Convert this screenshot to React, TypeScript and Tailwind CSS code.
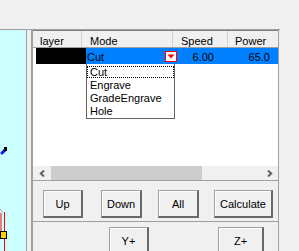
import React from "react";

const Btn = ({ label, className }: { label: string; className: string }) => (
  <div
    className={
      "h-[28px] flex items-center justify-center bg-[#f0f0f0] border border-[#a0a0a0] border-b-2 border-r-2 border-b-[#696969] border-r-[#696969] shadow-[inset_1px_1px_0_#ffffff] " +
      className
    }
  >
    {label}
  </div>
);

export default function App() {
  return (
    <div
      className="w-[299px] h-[251px] bg-[#f0f0f0] overflow-hidden flex flex-col text-black text-[11px] leading-[16px]"
      style={{ fontFamily: "'Liberation Sans', Arial, sans-serif" }}
    >
      <div className="h-[30px] w-[280px] shrink-0 border-b border-[#a0a0a0]" />
      <div className="flex flex-1 min-h-0">
        {/* canvas */}
        <div className="w-[27px] shrink-0 bg-[#ccffff] border-r border-[#a0a0a0] relative">
          <svg width="26" height="221" className="absolute left-0 top-0">
            <line x1="5" y1="120" x2="2" y2="123" stroke="#1010ff" strokeWidth="3" strokeLinecap="round" />
            <rect x="4" y="117" width="3" height="4" fill="#000" />
            <line x1="0" y1="179" x2="3.5" y2="183" stroke="#ff7070" strokeWidth="1" strokeDasharray="1.5 1" />
            <line x1="1" y1="183" x2="1" y2="201" stroke="#ff0000" strokeWidth="1" />
            <line x1="4.5" y1="182" x2="4.5" y2="201" stroke="#ff0000" strokeWidth="1" />
            <line x1="4.5" y1="208" x2="4.5" y2="221" stroke="#ff0000" strokeWidth="1" />
            <rect x="0.5" y="201.5" width="6" height="7" fill="#ffd200" stroke="#000" strokeWidth="1" />
          </svg>
        </div>
        <div className="w-[4px] shrink-0" />
        {/* panel */}
        <div className="w-[248px] shrink-0 flex flex-col border-l-2 border-r border-[#a0a0a0]">
          {/* table */}
          <div className="flex flex-col border-t border-[#808080]">
            {/* header */}
            <div className="h-[17px] flex border-b border-[#a0a0a0] bg-[#f0f0f0]">
              <div className="w-[49px] pl-[7px] pt-[2px] border-r border-[#d0d0d0]">layer</div>
              <div className="w-[91px] pl-[8px] pt-[2px] border-r border-[#d0d0d0]">Mode</div>
              <div className="w-[55px] pl-[8px] pt-[2px] border-r border-[#d0d0d0]">Speed</div>
              <div className="flex-1 pl-[7px] pt-[2px]">Power</div>
            </div>
            {/* body */}
            <div className="h-[118px] bg-white relative">
              <div className="h-[16px] flex">
                <div className="w-[3px]" />
                <div className="w-[50px] bg-black" />
                <div className="flex-1 flex bg-[#0080ff]">
                  <div className="w-[91px] flex items-center pl-[1px]">
                    <span className="pt-[1px] flex-1">Cut</span>
                    <div className="w-[12px] h-[11px] mt-[1px] border border-[#ff0000] bg-white flex items-center justify-center">
                      <svg width="8" height="5" viewBox="0 0 8 5">
                        <polygon points="0.5,0.5 7.5,0.5 4,4.5" fill="#ff0000" />
                      </svg>
                    </div>
                  </div>
                  <div className="w-[51px] text-right pr-[14px] pt-[1px]">6.00</div>
                  <div className="flex-1 text-right pr-[8px] pt-[1px]">65.0</div>
                </div>
              </div>
              {/* dropdown list */}
              <div className="absolute left-[53px] top-[16px] w-[89px] h-[55px] bg-white border border-t-0 border-[#646464] pt-[2px] leading-[13px]">
                <div className="absolute left-0 top-[2px] w-[87px] h-[12px] border border-dotted border-black" />
                <div className="h-[13px] pl-[3px]">Cut</div>
                <div className="h-[13px] pl-[3px]">Engrave</div>
                <div className="h-[13px] pl-[3px]">GradeEngrave</div>
                <div className="h-[13px] pl-[3px]">Hole</div>
              </div>
            </div>
            {/* scrollbar */}
            <div className="h-[14px] flex bg-[#f0f0f0]">
              <div className="w-[18px] flex items-center justify-center">
                <svg width="7" height="7" viewBox="0 0 7 7">
                  <polyline points="5,0.5 1.8,3.5 5,6.5" fill="none" stroke="#606060" strokeWidth="2" />
                </svg>
              </div>
              <div className="w-[151px] bg-[#cdcdcd]" />
              <div className="flex-1" />
              <div className="w-[18px] flex items-center justify-center">
                <svg width="7" height="7" viewBox="0 0 7 7">
                  <polyline points="2,0.5 5.2,3.5 2,6.5" fill="none" stroke="#606060" strokeWidth="2" />
                </svg>
              </div>
            </div>
          </div>
          <div className="h-[2px]" />
          {/* buttons row 1 */}
          <div className="border-t border-b border-[#a0a0a0] pt-[9px] pb-[3px] flex">
            <Btn label="Up" className="ml-[10px] w-[40px]" />
            <Btn label="Down" className="ml-[18px] w-[41px]" />
            <Btn label="All" className="ml-[16px] w-[41px]" />
            <Btn label="Calculate" className="ml-[15px] w-[59px]" />
          </div>
          {/* buttons row 2 */}
          <div className="pt-[5px] flex">
            <Btn label="Y+" className="ml-[76px] w-[40px]" />
            <Btn label="Z+" className="ml-[69px] w-[46px]" />
          </div>
        </div>
      </div>
    </div>
  );
}
